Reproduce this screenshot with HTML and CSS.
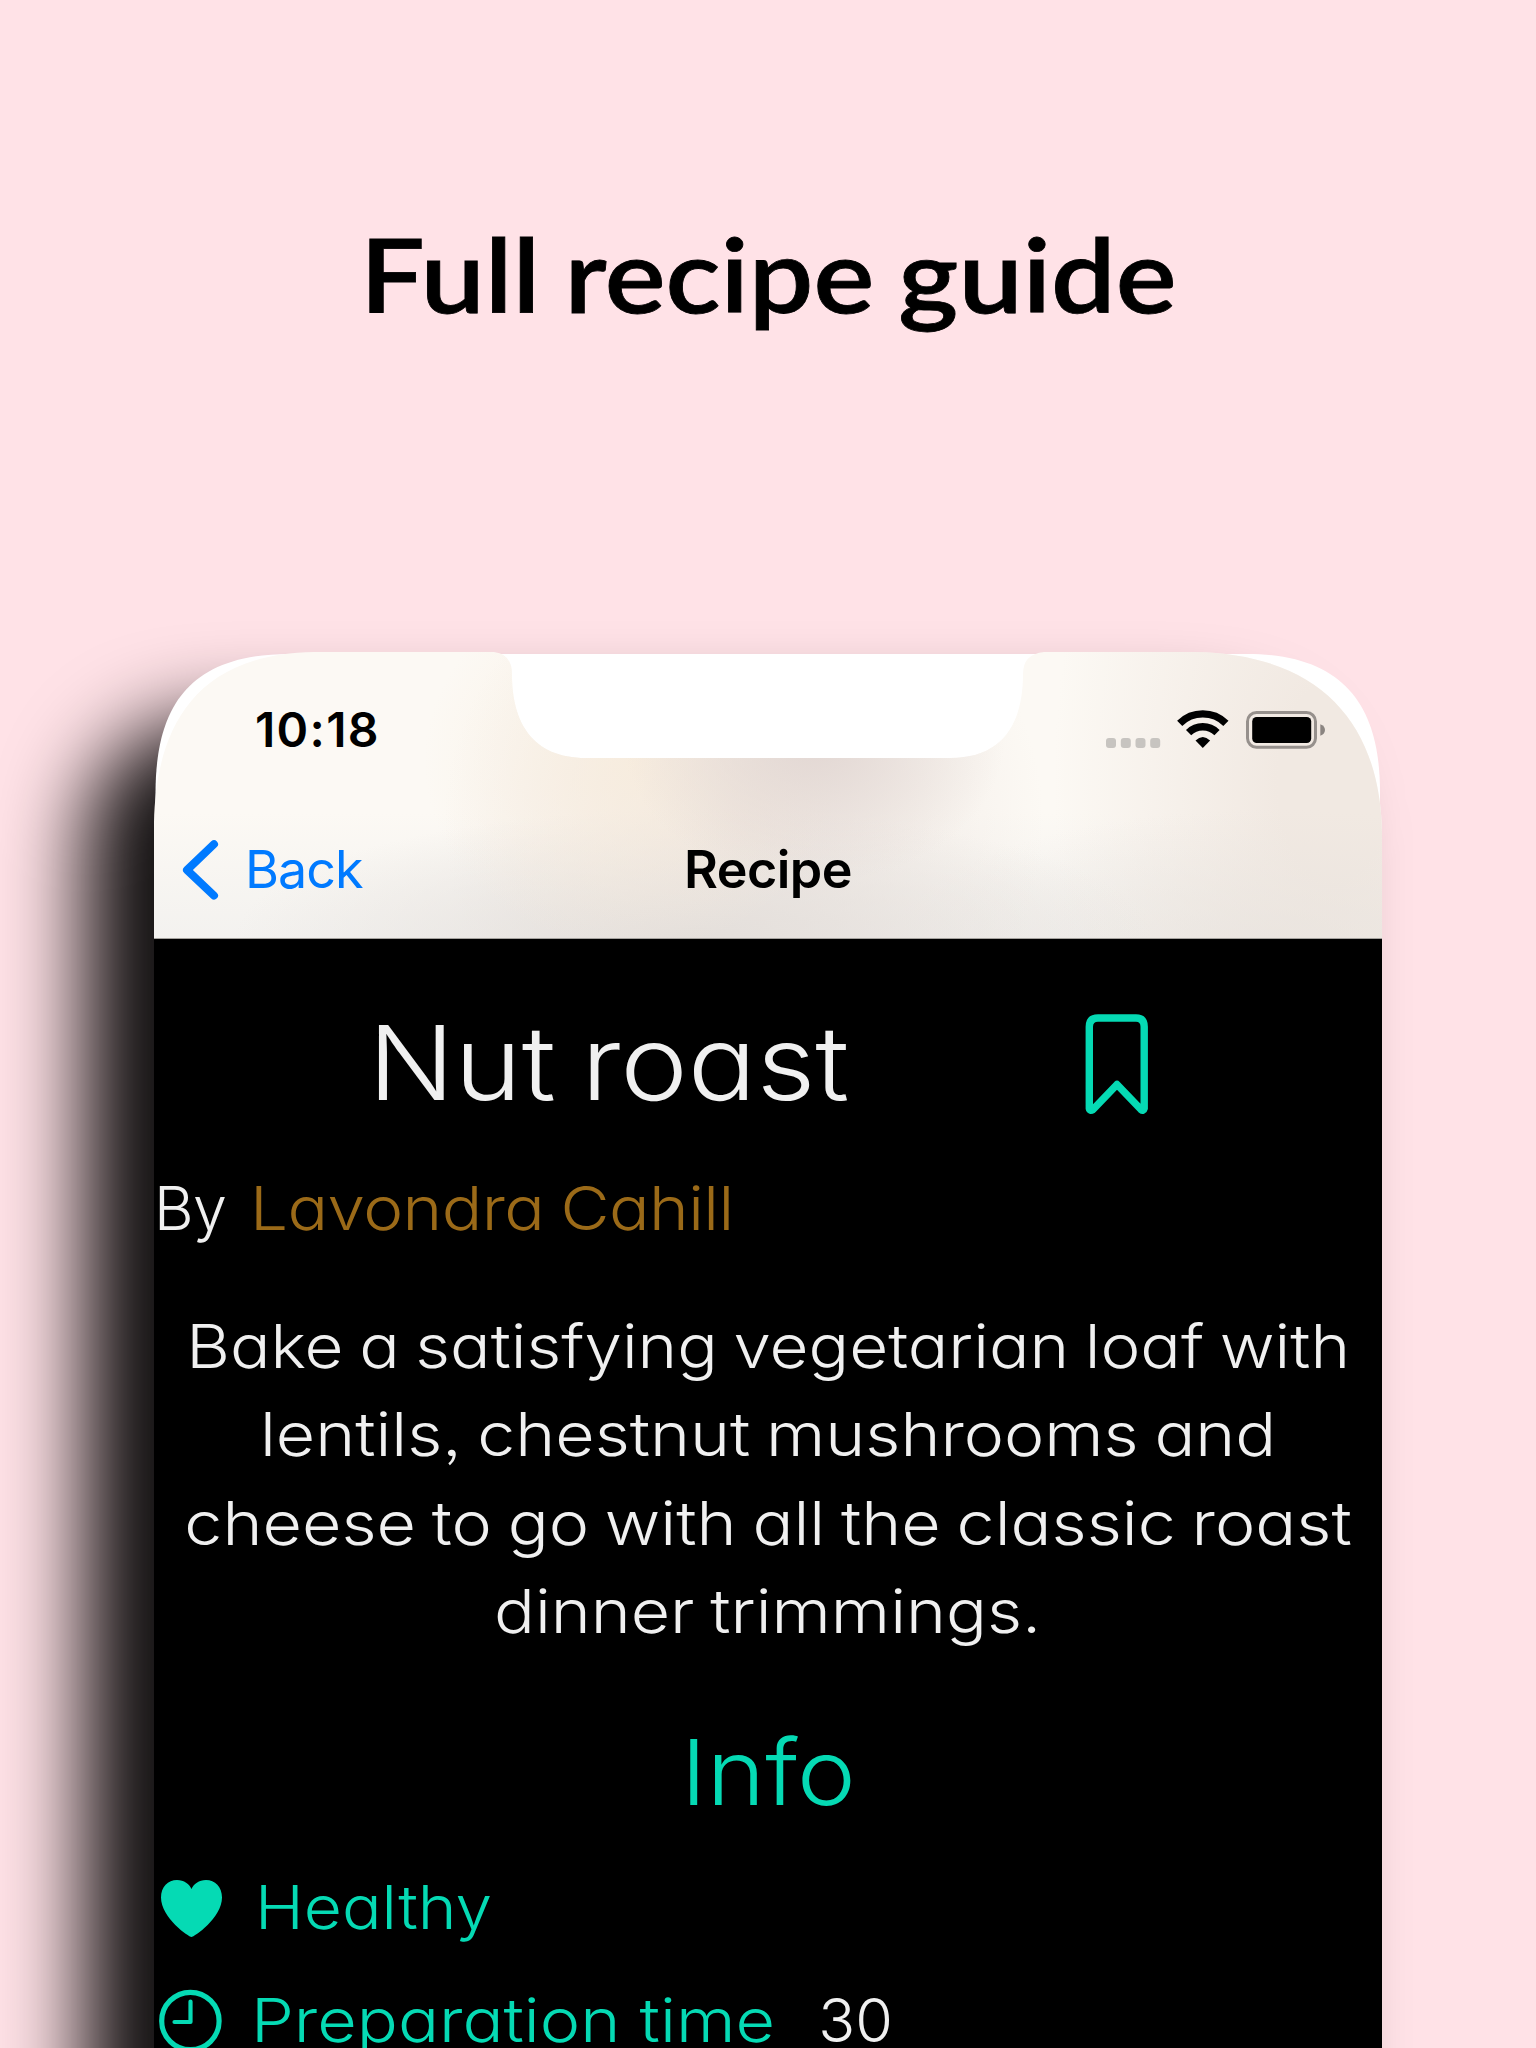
FILE: index.html
```html
<!DOCTYPE html>
<html lang="en">
<head>
<meta charset="utf-8">
<title>Full recipe guide</title>
<link rel="stylesheet" href="styles.css">
</head>
<body>
<main class="poster">
  <h1 class="headline"><span class="wide">Full recipe guide</span></h1>
  <section class="phone">
    <header class="top">
      <div class="status">
        <span class="clock">10:18</span>
        <svg width="220" height="44" viewBox="0 0 220 44" aria-hidden="true">
          <g fill="#c7c4c0"><rect x="1" y="30" width="10" height="10" rx="3"/><rect x="15.8" y="30" width="10" height="10" rx="3"/><rect x="30.5" y="30" width="10" height="10" rx="3"/><rect x="45.2" y="30" width="10" height="10" rx="3"/></g>
          <g fill="none" stroke="#000" stroke-width="7.4"><path d="M74.7 15.3A33 33 0 0 1 120.9 15.3"/><path d="M83.6 24.6A20.2 20.2 0 0 1 112 24.6"/></g>
          <path d="M90.5 32.6Q97.8 25.4 105.1 32.6L97.8 40Z"/>
          <rect x="142.5" y="4.5" width="68" height="34.8" rx="9" fill="none" stroke="#96908c" stroke-width="3"/>
          <rect x="147.2" y="9" width="59" height="26" rx="4.5"/>
          <path d="M215.3 16.2Q220 18 220 22T215.3 27.8Z" fill="#8b8581"/>
        </svg>
      </div>
      <nav class="bar">
        <a class="back"><svg width="38" height="62" viewBox="0 0 38 62" aria-hidden="true"><path d="M33 5.2 6 31 33 56.600" fill="none" stroke="#007aff" stroke-width="8" stroke-linecap="round" stroke-linejoin="round"/></svg><span>Back</span></a>
        <span class="title">Recipe</span>
      </nav>
    </header>
    <article class="recipe">
      <div class="name">
        <h2><span class="wide">Nut roast</span></h2>
        <svg width="64" height="102" viewBox="0 0 64 102" aria-hidden="true"><path d="M4.3 95.5V13.8Q4.3 5 13 5H51Q59.2 5 59.2 13.8V95.5Q58.5 98.5 56 96.5L32 71.5 8 96.5Q4.8 98.5 4.3 95.5Z" fill="none" stroke="#05dab4" stroke-width="7.4" stroke-linejoin="round"/></svg>
      </div>
      <p class="by"><span>By</span><a class="wide author">Lavondra Cahill</a></p>
      <p class="about"><span class="wide line1">Bake a satisfying vegetarian loaf with</span><span class="wide line2">lentils, chestnut mushrooms and</span><span class="wide line3">cheese to go with all the classic roast</span><span class="wide line4">dinner trimmings.</span></p>
      <h3 class="info"><span class="wide">Info</span></h3>
      <ul class="facts">
        <li><svg width="70" height="70" viewBox="0 0 70 70" aria-hidden="true"><path d="M37.5 65C35 65 7 46 7 25.5 7 15 14 8 23 8 30 8 35.5 12 37.5 17 39.5 12 45 8 52 8 61 8 68 15 68 25.5 68 46 40 65 37.5 65Z" fill="#05dab4"/></svg><span class="wide healthy">Healthy</span></li>
        <li><svg width="70" height="70" viewBox="0 0 70 70" aria-hidden="true"><g fill="none" stroke="#05dab4"><circle cx="36.4" cy="36" r="28.7" stroke-width="5.2"/><path d="M36.5 16.5V37H20.5" stroke-width="4.2" stroke-linecap="round" stroke-linejoin="round"/></g></svg><span class="wide prep">Preparation time</span><span class="num">30</span></li>
      </ul>
    </article>
  </section>
</main>
</body>
</html>
```
FILE: styles.css
```css
* { box-sizing: border-box; }
body { margin: 0; background: #ffe2e7; font-family: Inter, "Liberation Sans", sans-serif; }
h1, h2, h3, p, ul { margin: 0; padding: 0; font-weight: inherit; }
svg { display: block; flex: none; }

.wide { display: inline-block; transform: scaleX(var(--stretch, 1.093)); transform-origin: var(--from, left); }

.poster { height: 2048px; overflow: hidden; display: flex; flex-direction: column; align-items: center; isolation: isolate; }
.headline { --stretch: 1.112; --from: center; height: 652px; padding: 211px 2px 0 2px; font: 600 103px/124px Lato, sans-serif; color: #000; white-space: nowrap; word-spacing: -4px; -webkit-text-stroke: .8px #000; }

.phone { position: relative; width: 1228px; height: 1396px; flex: none; }
.phone::before { content: ""; position: absolute; z-index: -1; left: -69px; top: 69px; width: 1228px; height: 1700px; border-radius: 120px; background: rgba(0, 0, 0, .93); filter: blur(42px); }

.top { position: relative; height: 287px; }
.top::before, .top::after { content: ""; position: absolute; inset: 0; z-index: -1; }
.top::before { background: #fff; clip-path: path("M1.500 287V140C2 60 30 2 136 2H1093C1195 2 1226 60 1226 140V287Z"); }
.top::after {
  background:
    linear-gradient(#0000 286px, #a5a29e 286px),
    radial-gradient(190px 140px at 660px 90px, #e2d7d3, #e2d7d300),
    radial-gradient(210px 190px at 480px 110px, #f8ecdccc, #f8ecdc00),
    radial-gradient(460px 130px at 540px 287px, #e4dfdb, #e4dfdb00),
    radial-gradient(300px 290px at 590px 170px, #e9e0dbcc, #e9e0db00),
    radial-gradient(380px 130px at 1120px 287px, #e6e1dc99, #e6e1dc00),
    radial-gradient(280px 500px at 1180px 130px, #f1e9e2 20%, #f1e9e200),
    linear-gradient(#f5f4f200 160px, #f1f0eed0),
    #fcf9f4;
  clip-path: path("M0 287V170C2 90 30 2 160 0H340Q358 2 358 22C358 70 378 106 432 106H796C850 106 869 70 869 22Q869 2 890 0H1040C1170 2 1226 75 1228 180V287Z");
}
.status { height: 158px; padding: 56px 57px 0 101px; display: flex; justify-content: space-between; }
.clock { font-size: 48px; font-weight: 600; line-height: 58px; letter-spacing: 1.3px; margin-top: -7px; }
.bar { height: 129px; display: grid; grid-template-columns: 1fr auto 1fr; align-items: start; padding: 28px 27px 0; font-size: 52px; line-height: 64px; }
.back { display: flex; gap: 26px; align-items: center; color: #007aff; letter-spacing: -1px; }
.title { font-weight: 600; letter-spacing: -.5px; }

.recipe { height: 1109px; background: #000; color: #f0f0f0; font-size: 61px; font-weight: 300; line-height: 88px; font-feature-settings: "cv11", "ss03"; white-space: nowrap; }
.name { height: 216px; padding: 62px 0 0 213.5px; display: flex; align-items: flex-start; }
.name h2 { width: 717px; font-size: 103px; line-height: 124px; word-spacing: -6px; --stretch: 1.107; }
.name svg { margin-top: 12px; }
.by { display: flex; height: 88px; gap: 23px; padding-top: 8.5px; letter-spacing: -.5px; }
.author { color: #9b6a18; --stretch: 1.105; word-spacing: -2px; }
.about { margin-top: 59px; display: flex; flex-direction: column; align-items: center; line-height: 88.3px; word-spacing: -3px; --from: center; }
.line1 { --stretch: 1.104; }
.line2 { --stretch: 1.114; }
.line3 { --stretch: 1.116; }
.line4 { --stretch: 1.114; }
.info { --from: center; --stretch: 1.09; color: #05dab4; font-size: 91px; line-height: 110px; display: flex; justify-content: center; margin-top: 62px; }
.facts { list-style: none; color: #05dab4; margin-top: 44.6px; line-height: 70px; }
.facts li { display: flex; height: 113.4px; align-items: flex-start; }
.healthy { margin-left: 30.5px; --stretch: 1.08; }
.prep { margin-left: 27px; --stretch: 1.119; }
.num { color: #f0f0f0; margin-left: 99px; }
```
